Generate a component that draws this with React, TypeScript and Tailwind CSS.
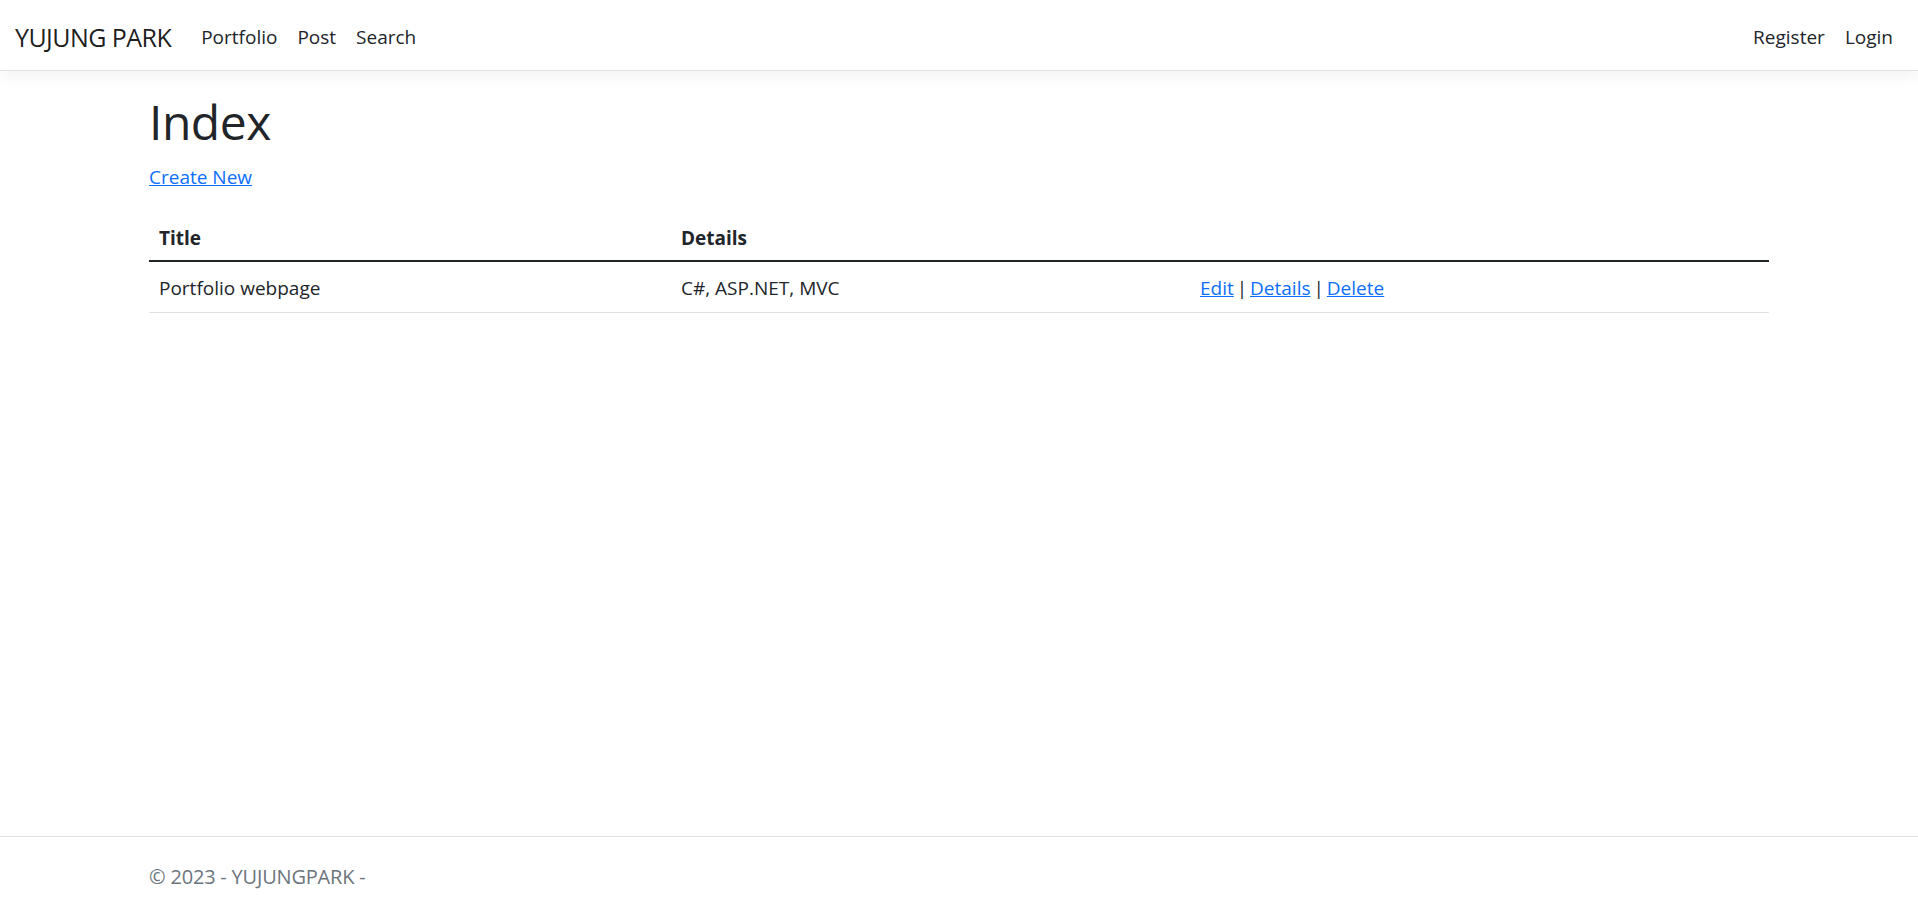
import React from "react";

const font = { fontFamily: '"Open Sans", "Noto Sans", sans-serif' };

export default function App() {
  return (
    <div className="min-h-screen flex flex-col bg-white text-[#212529]" style={font}>
      <nav className="h-[71px] pt-[4px] flex items-center justify-between px-[15px] border-b border-[#dee2e6] shadow-[0_5px_15px_rgba(0,0,0,0.05)] bg-white">
        <div className="flex items-center">
          <a className="text-[25px] leading-[36px] text-[rgba(0,0,0,0.9)] mr-[20px] tracking-[-0.55px]">YUJUNG PARK</a>
          <ul className="flex items-center">
            <li><a className="block px-[10px] text-[19px] leading-[30px] text-[#212529]">Portfolio</a></li>
            <li><a className="block px-[10px] text-[19px] leading-[30px] text-[#212529]">Post</a></li>
            <li><a className="block px-[10px] text-[19px] leading-[30px] text-[#212529]">Search</a></li>
          </ul>
        </div>
        <ul className="flex items-center">
          <li><a className="block px-[10px] text-[19px] leading-[30px] text-[#212529]">Register</a></li>
          <li><a className="block px-[10px] text-[19px] leading-[30px] text-[#212529]">Login</a></li>
        </ul>
      </nav>

      <main className="mx-auto w-[1650px] px-[15px] pt-[21px]">
        <h1 className="text-[48px] leading-[60px] font-normal mb-[10px] tracking-[-0.5px]">Index</h1>
        <p className="mb-[18px] text-[19px] leading-[30px]">
          <a className="text-[#0d6efd] underline">Create New</a>
        </p>
        <table className="w-full text-[19px] leading-[30px] border-collapse">
          <thead>
            <tr className="border-b-2 border-[#212529]">
              <th className="w-[522px] text-left font-bold px-[10px] pt-[13px] pb-[7px]">Title</th>
              <th className="w-[519px] text-left font-bold px-[10px] pt-[13px] pb-[7px]">Details</th>
              <th className="px-[10px] pt-[13px] pb-[7px]"></th>
            </tr>
          </thead>
          <tbody>
            <tr className="border-b border-[#dee2e6]">
              <td className="px-[10px] pt-[11px] pb-[9px]">Portfolio webpage</td>
              <td className="px-[10px] pt-[11px] pb-[9px]">C#, ASP.NET, MVC</td>
              <td className="px-[10px] pt-[11px] pb-[9px] [word-spacing:-2px]">
                <a className="text-[#0d6efd] underline">Edit</a> |{" "}
                <a className="text-[#0d6efd] underline">Details</a> |{" "}
                <a className="text-[#0d6efd] underline">Delete</a>
              </td>
            </tr>
          </tbody>
        </table>
      </main>

      <footer className="mt-auto border-t border-[#dee2e6] h-[74px] pt-[6px] flex items-center">
        <div className="mx-auto w-[1650px] px-[15px] text-[20px] text-[#6c757d] whitespace-nowrap tracking-[-0.2px]">
          © 2023 - YUJUNGPARK -
        </div>
      </footer>
    </div>
  );
}
